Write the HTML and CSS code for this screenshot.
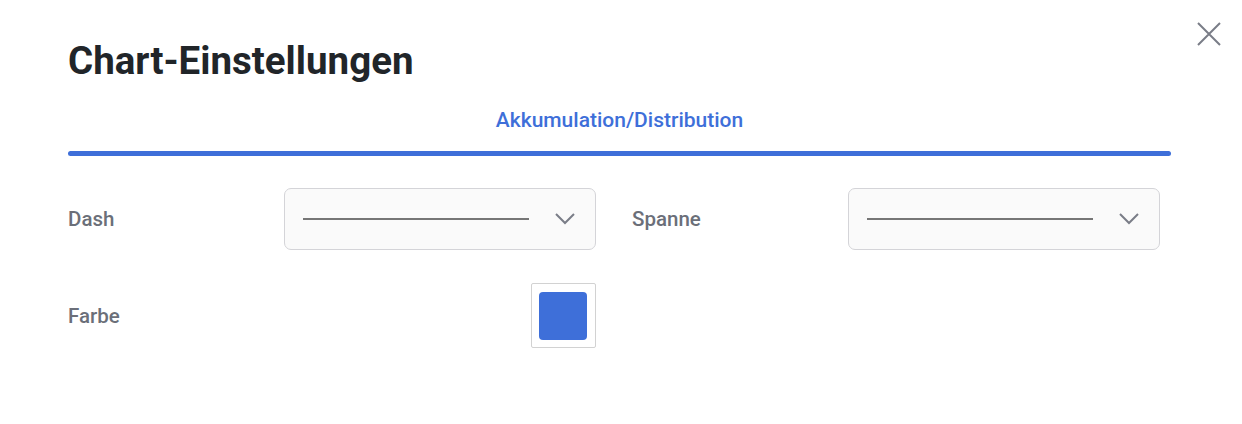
FILE: index.html
```html
<!DOCTYPE html>
<html lang="de">
<head>
<meta charset="utf-8">
<title>Chart-Einstellungen</title>
<link rel="stylesheet" href="styles.css">
</head>
<body>
<div class="modal">
  <button class="close" aria-label="Schließen">
    <svg width="26" height="26" viewBox="0 0 26 26"><path d="M2 2L24 24M24 2L2 24" stroke="#7a7d87" stroke-width="2" fill="none"/></svg>
  </button>
  <h1 class="title">Chart-Einstellungen</h1>
  <div class="tabs">
    <div class="tab">Akkumulation/Distribution</div>
    <div class="tab-line"></div>
  </div>
  <div class="form">
    <div class="field">
      <span class="label">Dash</span>
      <div class="select">
        <span class="dash"></span>
        <svg class="chev" width="20" height="12" viewBox="0 0 20 12"><path d="M1 1L10 10L19 1" stroke="#7a7d87" stroke-width="2" fill="none"/></svg>
      </div>
    </div>
    <div class="field">
      <span class="label">Spanne</span>
      <div class="select">
        <span class="dash"></span>
        <svg class="chev" width="20" height="12" viewBox="0 0 20 12"><path d="M1 1L10 10L19 1" stroke="#7a7d87" stroke-width="2" fill="none"/></svg>
      </div>
    </div>
    <div class="field">
      <span class="label">Farbe</span>
      <div class="swatch-wrap"><div class="swatch"></div></div>
    </div>
  </div>
</div>
</body>
</html>
```
FILE: styles.css
```css
* { box-sizing: border-box; }
html, body { margin: 0; padding: 0; background: #fff; }
body { font-family: Roboto, "Liberation Sans", sans-serif; width: 1242px; height: 424px; overflow: hidden; }
.modal { position: relative; padding: 38px 71px 0 68px; }
.close { position: absolute; top: 21px; right: 20px; border: 0; background: none; padding: 0; width: 26px; height: 26px; cursor: pointer; }
.close svg { display: block; }
.title { margin: 0; font-size: 38.5px; font-weight: 700; color: #212529; line-height: 46px; }
.tabs { margin-top: 22px; }
.tab { text-align: center; color: #3e6fd9; font-size: 21px; font-weight: 500; line-height: 28px; }
.tab-line { margin-top: 17px; height: 5px; background: #3e6fd9; border-radius: 3px; }
.form { display: grid; grid-template-columns: 528px 528px; column-gap: 36px; row-gap: 33px; margin-top: 32px; }
.field { display: flex; align-items: center; justify-content: space-between; }
.label { font-size: 20.5px; font-weight: 500; color: #6b6f79; }
.select { width: 312px; height: 62px; border: 1px solid #d4d4d8; border-radius: 7px; background: #fafafa; display: flex; align-items: center; padding: 0 20px 0 18px; }
.dash { width: 226px; height: 2px; background: #767676; }
.chev { margin-left: auto; display: block; }
.swatch-wrap { width: 65px; height: 65px; border: 1px solid #d2d2d2; border-radius: 2px; padding: 8px 7px 8px 7px; }
.swatch { width: 48px; height: 48px; background: #3e6fd9; border-radius: 4px; }
```
